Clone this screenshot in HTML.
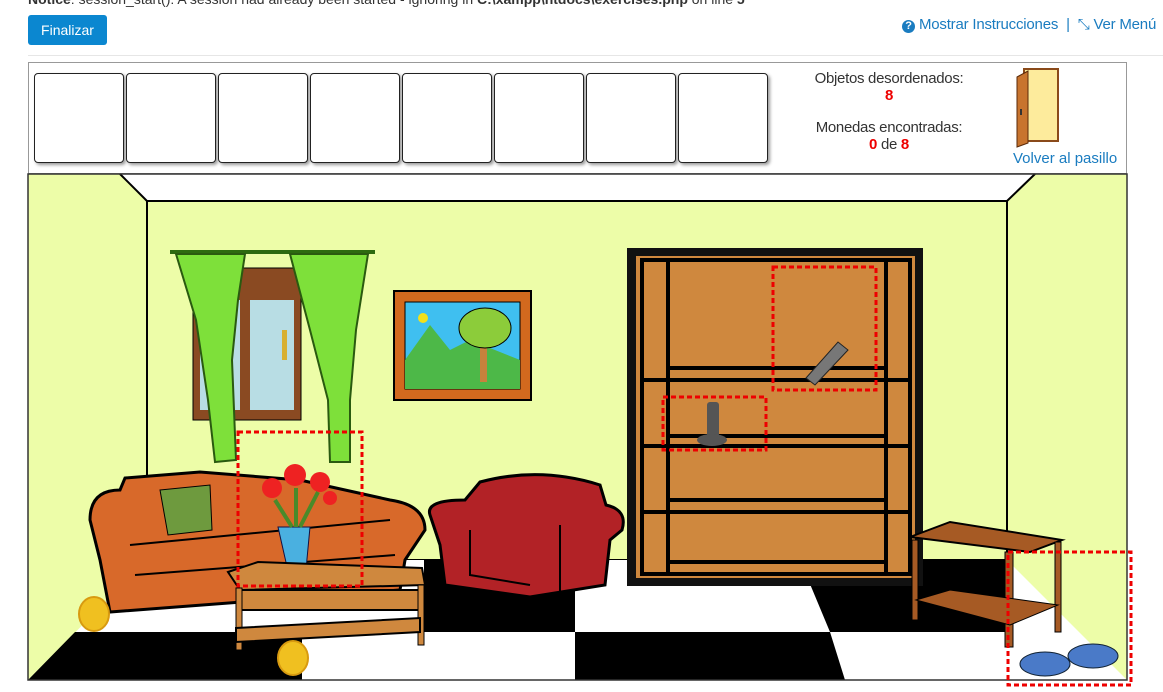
<!DOCTYPE html>
<html><head><meta charset="utf-8"><style>
body{margin:0;width:1163px;height:692px;overflow:hidden;background:#fff;font-family:"Liberation Sans",sans-serif;position:relative}
.notice{position:absolute;left:28px;top:-9px;font-size:14px;color:#333;white-space:nowrap}
.btn{position:absolute;left:28px;top:15px;width:79px;height:30px;background:#0b87d0;color:#fff;font-size:14px;line-height:30px;text-align:center;border-radius:3px}
.links{position:absolute;left:902px;top:16px;font-size:15px;color:#1a7cc0;white-space:nowrap;letter-spacing:-0.2px}
.hr{position:absolute;left:28px;right:0;top:55px;border-top:1px solid #e6e6e6}
.panel{position:absolute;left:28px;top:62px;width:1099px;height:112px;border:1px solid #999;box-sizing:border-box}
.slot{position:absolute;top:10px;width:88px;height:88px;border:1px solid #222;border-radius:4px;box-shadow:2px 2px 3px #999;background:#fff}
.info{position:absolute;font-size:15px;color:#333;text-align:center;width:180px;letter-spacing:-0.3px}
.red{color:#e00;font-weight:bold}
</style></head><body>
<div class="notice"><b>Notice</b>: session_start(): A session had already been started - ignoring in <b>C:\xampp\htdocs\exercises.php</b> on line <b>5</b></div>
<div class="btn">Finalizar</div>
<div class="links"><span style="display:inline-block;width:13px;height:13px;border-radius:50%;background:#1a7cc0;color:#fff;font-size:11px;line-height:13px;text-align:center;font-weight:bold">?</span> Mostrar Instrucciones &nbsp;|&nbsp; ⤡ Ver Menú</div>
<div class="hr"></div>
<div class="panel">
<div class="slot" style="left:5px"></div><div class="slot" style="left:97px"></div><div class="slot" style="left:189px"></div><div class="slot" style="left:281px"></div><div class="slot" style="left:373px"></div><div class="slot" style="left:465px"></div><div class="slot" style="left:557px"></div><div class="slot" style="left:649px"></div>
<div class="info" style="left:770px;top:7px">Objetos desordenados:<br><span class="red">8</span></div>
<div class="info" style="left:770px;top:56px">Monedas encontradas:<br><span class="red">0</span> de <span class="red">8</span></div>
<svg style="position:absolute;left:985px;top:4px" width="50" height="82"><rect x="10" y="2" width="34" height="72" fill="#fdeb9c" stroke="#8a4a1a" stroke-width="2"/><polygon points="3,10 14,4 14,76 3,80" fill="#c8742e" stroke="#5a2a0a"/><rect x="6" y="42" width="2" height="6" fill="#333"/></svg>
<div style="position:absolute;left:984px;top:87px;font-size:15px;color:#1a7cc0">Volver al pasillo</div>
</div>
<svg style="position:absolute;left:0;top:0" width="1163" height="692">
<rect x="28" y="174" width="1099" height="506" fill="#edfda8"/>
<polygon points="120,174 1035,174 1007,201 147,201" fill="#fff"/>
<line x1="120" y1="174" x2="147" y2="201" stroke="#000" stroke-width="2"/>
<line x1="1035" y1="174" x2="1007" y2="201" stroke="#000" stroke-width="2"/>
<rect x="147" y="201" width="860" height="359" fill="#edfda8" stroke="#000" stroke-width="2"/>
<polygon points="147,560 1007,560 1127,680 28,680" fill="#fff"/>
<polygon points="424,560 575,560 575,632 424,632" fill="#000"/>
<polygon points="800,560 1007,560 1010,632 830,632" fill="#000"/>
<polygon points="75,632 302,632 302,680 28,680" fill="#000"/>
<polygon points="575,632 830,632 845,680 575,680" fill="#000"/>
<rect x="28" y="174" width="1099" height="506" fill="none" stroke="#333" stroke-width="1.5"/>
<!-- window -->
<rect x="193" y="268" width="108" height="152" fill="#8a4a22" stroke="#000"/>
<rect x="200" y="300" width="40" height="110" fill="#b8dde4"/><rect x="250" y="300" width="44" height="110" fill="#b8dde4"/>
<rect x="282" y="330" width="5" height="30" fill="#d8b030"/>
<path d="M170 252 L375 252" stroke="#2d6a10" stroke-width="4"/>
<path d="M176 254 L245 254 L238 300 L232 360 L236 460 L215 462 L208 400 L196 320 Z" fill="#7ee03a" stroke="#2a5a10" stroke-width="2"/>
<path d="M290 254 L368 254 L356 330 L350 400 L350 462 L330 462 L328 400 L310 330 Z" fill="#7ee03a" stroke="#2a5a10" stroke-width="2"/>
<!-- picture -->
<rect x="394" y="291" width="137" height="109" fill="#d2691e" stroke="#000" stroke-width="2"/>
<rect x="405" y="302" width="115" height="87" fill="#3fbff0" stroke="#000"/>
<polygon points="405,389 405,360 430,325 450,350 470,340 520,360 520,389" fill="#4db848"/>
<circle cx="423" cy="318" r="5" fill="#f3e01a"/>
<rect x="480" y="340" width="7" height="42" fill="#c8823c"/>
<ellipse cx="485" cy="328" rx="26" ry="20" fill="#8ccc3a" stroke="#000"/>
<!-- bookcase -->
<rect x="627" y="248" width="296" height="338" fill="#111"/>
<rect x="636" y="256" width="279" height="322" fill="#cf883e"/>
<g stroke="#000" stroke-width="4" fill="none">
<rect x="642" y="260" width="268" height="314"/>
<line x1="668" y1="260" x2="668" y2="574"/><line x1="886" y1="260" x2="886" y2="574"/>
<line x1="642" y1="380" x2="910" y2="380"/><line x1="642" y1="446" x2="910" y2="446"/><line x1="642" y1="512" x2="910" y2="512"/>
<line x1="668" y1="368" x2="886" y2="368"/><line x1="668" y1="436" x2="886" y2="436"/><line x1="668" y1="500" x2="886" y2="500"/><line x1="668" y1="562" x2="886" y2="562"/>
</g>
<polygon points="806,378 838,342 848,350 815,385" fill="#777" stroke="#222"/>
<rect x="707" y="402" width="12" height="35" rx="3" fill="#555"/><ellipse cx="712" cy="440" rx="15" ry="6" fill="#555"/>
<!-- sofa -->
<path d="M90 520 Q90 490 120 490 L125 478 L200 472 L300 480 L390 500 Q425 505 425 530 L405 560 L400 590 L110 612 L100 560 Z" fill="#d8692a" stroke="#000" stroke-width="3"/>
<path d="M130 545 L390 520 M135 575 L395 555" stroke="#000" stroke-width="2" fill="none"/>
<polygon points="160,490 210,485 212,530 168,535" fill="#6e9a3e" stroke="#000"/>
<!-- flowers vase -->
<path d="M278 527 L310 527 L305 580 L290 580 Z" fill="#4ab0e0" stroke="#114"/>
<circle cx="272" cy="488" r="10" fill="#e22"/><circle cx="295" cy="475" r="11" fill="#e22"/><circle cx="320" cy="482" r="10" fill="#e22"/><circle cx="330" cy="498" r="7" fill="#e22"/>
<path d="M275 500 L292 527 M296 488 L296 527 M318 492 L300 527" stroke="#4a8a2a" stroke-width="4"/>
<!-- armchair -->
<path d="M430 515 Q425 500 465 500 L480 482 Q540 466 600 485 L606 505 Q628 510 622 530 L610 540 L605 585 L530 597 L445 585 L440 545 Z" fill="#b22226" stroke="#000" stroke-width="3"/>
<path d="M470 530 L470 575 L530 585 M560 525 L560 595" stroke="#000" stroke-width="2" fill="none"/>
<!-- coffee table -->
<polygon points="228,572 258,562 422,568 425,585 240,590" fill="#cf883e" stroke="#000" stroke-width="2"/>
<rect x="240" y="590" width="185" height="20" fill="#cf883e" stroke="#000" stroke-width="2"/>
<rect x="236" y="588" width="6" height="62" fill="#cf883e" stroke="#000"/><rect x="418" y="585" width="6" height="60" fill="#cf883e" stroke="#000"/>
<polygon points="236,628 420,618 420,632 236,642" fill="#cf883e" stroke="#000" stroke-width="2"/>
<!-- side table -->
<polygon points="910,537 950,522 1062,540 1030,552" fill="#a65a24" stroke="#000" stroke-width="2"/>
<rect x="912" y="540" width="6" height="80" fill="#a65a24" stroke="#000"/><rect x="1005" y="552" width="8" height="95" fill="#a65a24" stroke="#000"/><rect x="1055" y="542" width="6" height="90" fill="#a65a24" stroke="#000"/>
<polygon points="916,600 950,590 1058,605 1010,625" fill="#a65a24" stroke="#000"/>
<!-- shoes -->
<ellipse cx="1045" cy="664" rx="25" ry="12" fill="#4a7ac8" stroke="#123"/><ellipse cx="1093" cy="656" rx="25" ry="12" fill="#4a7ac8" stroke="#123"/>
<!-- coins -->
<ellipse cx="94" cy="614" rx="15" ry="17" fill="#f0c020" stroke="#d89a10" stroke-width="2"/>
<ellipse cx="293" cy="658" rx="15" ry="17" fill="#f0c020" stroke="#d89a10" stroke-width="2"/>
<g fill="none" stroke="#e00" stroke-width="3" stroke-dasharray="5,3">
<rect x="773" y="267" width="103" height="123"/><rect x="663" y="397" width="103" height="53"/>
<rect x="238" y="432" width="124" height="154"/><rect x="1008" y="552" width="123" height="133"/>
</g>
</svg>
</body></html>
